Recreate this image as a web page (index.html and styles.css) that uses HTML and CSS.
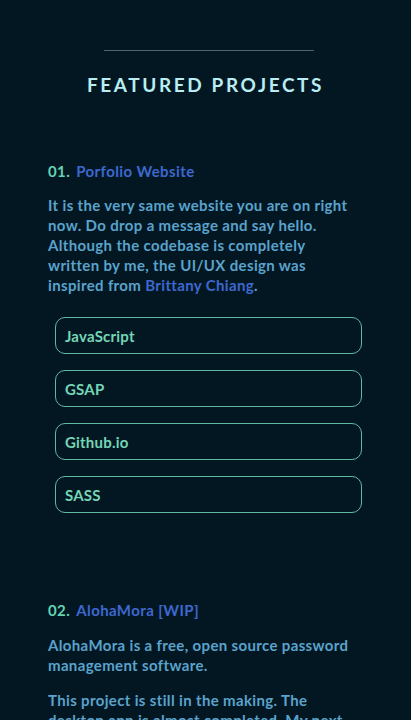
FILE: index.html
```html
<!DOCTYPE html>
<html>
<head>
<meta charset="utf-8">
<link rel="stylesheet" href="styles.css">
</head>
<body>
<section class="projects">
  <div class="rule"></div>
  <h2 class="heading">FEATURED PROJECTS</h2>

  <article class="project">
    <h3 class="title"><span class="num">01.</span> <span class="name">Porfolio Website</span></h3>
    <p class="desc">It is the very same website you are on right<br>now. Do drop a message and say hello.<br>Although the codebase is completely<br>written by me, the UI/UX design was<br>inspired from <a class="link">Brittany Chiang</a>.</p>
    <ul class="tags">
      <li class="tag">JavaScript</li>
      <li class="tag">GSAP</li>
      <li class="tag">Github.io</li>
      <li class="tag">SASS</li>
    </ul>
  </article>

  <article class="project second">
    <h3 class="title"><span class="num">02.</span> <span class="name">AlohaMora [WIP]</span></h3>
    <p class="desc first">AlohaMora is a free, open source password<br>management software.</p>
    <p class="desc para">This project is still in the making. The<br>desktop app is almost completed. My next<br>step is to build the mobile app.</p>
  </article>
</section>
</body>
</html>
```
FILE: styles.css
```css
html, body {
  margin: 0;
  padding: 0;
  background: #031722;
  overflow: hidden;
  height: 720px;
}
body {
  font-family: "Lato", "Open Sans", sans-serif;
  font-weight: 700;
}
.projects {
  padding: 50px 40px 0 48px;
  display: flex;
  flex-direction: column;
}
.rule {
  align-self: flex-start;
  width: 210px;
  height: 1px;
  background: #4a6470;
  margin-left: 56px;
}
.heading {
  margin: 22px 0 0 0;
  text-align: center;
  font-size: 19px;
  letter-spacing: 2.6px;
  color: #b8eef3;
  font-weight: 700;
  line-height: 24px;
  padding-right: 8px;
}
.project {
  margin-top: 64px;
}
.project.second {
  margin-top: 87px;
}
.title {
  margin: 0;
  font-size: 15px;
  line-height: 20px;
  font-weight: 700;
  letter-spacing: 0.4px;
}
.num {
  color: #64d4b4;
}
.name {
  color: #3d68d0;
  margin-left: 2px;
}
.desc {
  margin: 14px 0 0 0;
  font-size: 15px;
  line-height: 20px;
  color: #5aa3cc;
  letter-spacing: 0.35px;
  white-space: nowrap;
}
.desc.first {
  margin-top: 15px;
}
.desc.para {
  margin-top: 15px;
}
.link {
  color: #3d68d0;
}
.tags {
  list-style: none;
  margin: 22px 0 0 7px;
  padding: 0;
  display: flex;
  flex-direction: column;
  gap: 16px;
  width: 307px;
}
.tag {
  box-sizing: border-box;
  border: 1.6px solid #62b8a2;
  border-radius: 10px;
  height: 37px;
  display: flex;
  align-items: center;
  padding: 0 9px;
  color: #74d6b6;
  font-size: 15px;
  letter-spacing: 0.2px;
}
```
